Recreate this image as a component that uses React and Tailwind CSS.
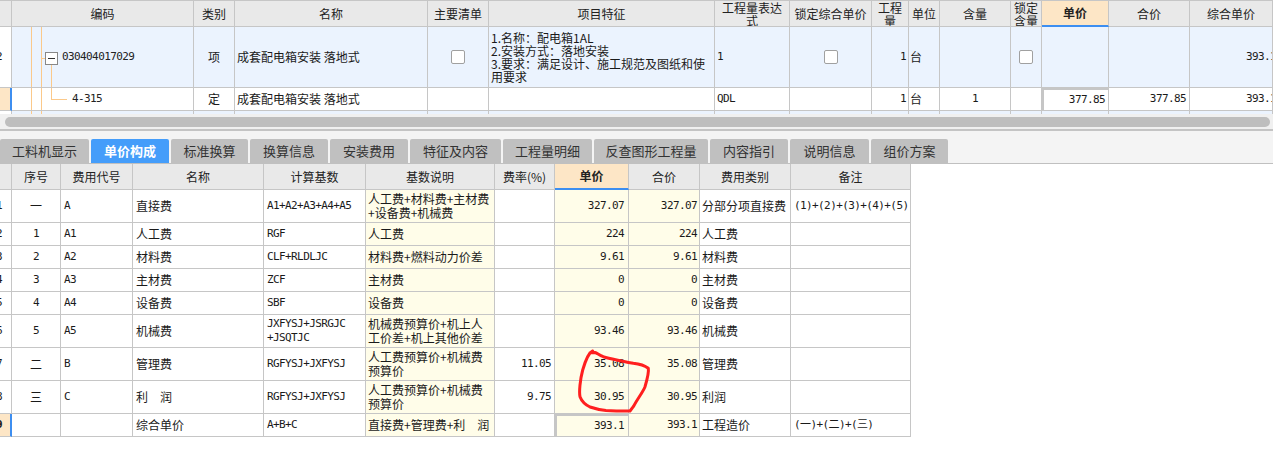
import React from 'react';

const CN = "font-['Noto_Sans_CJK_SC','Microsoft_YaHei',sans-serif]";
const MONO = "font-['DejaVu_Sans_Mono','Liberation_Mono','Noto_Sans_CJK_SC',monospace] text-[11px] tracking-[-0.6px]";
const LINE = 'border-r border-b border-[#c6c6c6]';

const Cell = ({ className = '', children }) => (
  <div className={`${LINE} relative flex items-center overflow-hidden ${className}`}>{children}</div>
);

const Check = () => <div className="w-[14px] h-[14px] bg-white border border-[#a0a0a0] rounded-[2px]" />;

const Lines = () => (
  <>
    <div className="absolute left-[19px] top-0 bottom-0 w-px bg-[#fbc98a]" />
    <div className="absolute left-[29px] top-0 bottom-0 w-px bg-[#fbc98a]" />
  </>
);

const TopTable = () => {
  const head = 'bg-[#e9e9e9] justify-center text-center text-[12px] leading-[12px] text-[#222]';
  const head2 = 'bg-[#e9e9e9] justify-center text-center text-[12px] leading-[13px] text-[#222]';
  const blue = 'bg-[#ebf3fe]';
  return (
    <div className="grid grid-cols-[12px_182px_41px_193px_61px_226px_75px_82px_37px_31px_71px_31px_67px_81px_83px] grid-rows-[26px_61px_23px_3px] border-t border-[#c6c6c6]">
      {/* header */}
      <Cell className={head} />
      <Cell className={head}>编码</Cell>
      <Cell className={head}>类别</Cell>
      <Cell className={head}>名称</Cell>
      <Cell className={head}>主要清单</Cell>
      <Cell className={head}>项目特征</Cell>
      <Cell className={head2}><div>工程量表达<br />式</div></Cell>
      <Cell className={`${head} whitespace-nowrap`}>锁定综合单价</Cell>
      <Cell className={head2}><div>工程<br />量</div></Cell>
      <Cell className={head}>单位</Cell>
      <Cell className={head}>含量</Cell>
      <Cell className={head2}><div>锁定<br />含量</div></Cell>
      <Cell className="bg-[#fde6c6] justify-center text-[12px] font-bold text-[#222] border-b-2 border-b-[#3d8ef0]">单价</Cell>
      <Cell className={head}>合价</Cell>
      <Cell className={head}>综合单价</Cell>

      {/* row 1 */}
      <Cell className="bg-white"><span className={`${MONO} -ml-[4px]`}>2</span></Cell>
      <Cell className={blue}>
        <Lines />
        <div className="absolute left-[29px] top-[31px] w-[4px] h-px bg-[#fbc98a]" />
        <div className="absolute left-[39px] top-[37px] bottom-0 w-px bg-[#fbc98a]" />
        <div className="absolute left-[33px] top-[25px] w-[13px] h-[13px] bg-white border border-[#888] flex items-center justify-center">
          <div className="w-[7px] h-px bg-[#333]" />
        </div>
        <span className={`${MONO} ml-[50px] text-[#222]`}>030404017029</span>
      </Cell>
      <Cell className={`${blue} justify-center text-[12px]`}>项</Cell>
      <Cell className={`${blue} pl-[2px] text-[12px]`}>成套配电箱安装 落地式</Cell>
      <Cell className={`${blue} justify-center`}><Check /></Cell>
      <Cell className={`${blue} pl-[2px] text-[12px] leading-[13px]`}>
        <div>1.名称：配电箱1AL<br />2.安装方式：落地安装<br />3.要求：满足设计、施工规范及图纸和使用要求</div>
      </Cell>
      <Cell className={`${blue} pl-[2px]`}><span className={MONO}>1</span></Cell>
      <Cell className={`${blue} justify-center`}><Check /></Cell>
      <Cell className={`${blue} justify-end pr-[2px]`}><span className={MONO}>1</span></Cell>
      <Cell className={`${blue} pl-px text-[12px]`}>台</Cell>
      <Cell className={blue} />
      <Cell className={`${blue} justify-center`}><Check /></Cell>
      <Cell className={blue} />
      <Cell className={blue} />
      <Cell className={`${blue} justify-end`}><span className={`${MONO} -mr-[4px]`}>393.1</span></Cell>

      {/* row 2 */}
      <Cell className="bg-[#fde6c6] border-r-2 border-r-[#3d8ef0]" />
      <Cell className="bg-white">
        <Lines />
        <div className="absolute left-[39px] top-0 h-[11px] w-px bg-[#fbc98a]" />
        <div className="absolute left-[39px] top-[11px] w-[16px] h-px bg-[#fbc98a]" />
        <span className={`${MONO} ml-[60px] text-[#222]`}>4-315</span>
      </Cell>
      <Cell className="justify-center text-[12px]">定</Cell>
      <Cell className="pl-[2px] text-[12px]">成套配电箱安装 落地式</Cell>
      <Cell />
      <Cell />
      <Cell className="pl-[2px]"><span className={MONO}>QDL</span></Cell>
      <Cell />
      <Cell className="justify-end pr-[2px]"><span className={MONO}>1</span></Cell>
      <Cell className="pl-px text-[12px]">台</Cell>
      <Cell className="justify-center"><span className={MONO}>1</span></Cell>
      <Cell />
      <Cell className="justify-end pr-[3px] border-2 border-[#7f7f7f]"><span className={MONO}>377.85</span></Cell>
      <Cell className="justify-end pr-[3px]"><span className={MONO}>377.85</span></Cell>
      <Cell className="justify-end"><span className={`${MONO} -mr-[4px]`}>393.1</span></Cell>

      {/* partial row */}
      {Array.from({ length: 15 }).map((_, i) => (
        <div key={i} className={`relative border-r border-[#c6c6c6] ${i === 0 ? 'bg-white' : 'bg-[#ebf3fe]'}`}>
          {i === 1 && <Lines />}
        </div>
      ))}
    </div>
  );
};

const tabs = [
  ['工料机显示', 'w-[89px]'],
  ['单价构成', 'w-[78px]'],
  ['标准换算', 'w-[77px]'],
  ['换算信息', 'w-[78px]'],
  ['安装费用', 'w-[78px]'],
  ['特征及内容', 'w-[91px]'],
  ['工程量明细', 'w-[89px]'],
  ['反查图形工程量', 'w-[114px]'],
  ['内容指引', 'w-[78px]'],
  ['说明信息', 'w-[79px]'],
  ['组价方案', 'w-[77px]'],
];

const rows = [
  ['1', '一', 'A', '直接费', 'A1+A2+A3+A4+A5', '人工费+材料费+主材费\n+设备费+机械费', '', '327.07', '327.07', '分部分项直接费', '(1)+(2)+(3)+(4)+(5)'],
  ['2', '1', 'A1', '人工费', 'RGF', '人工费', '', '224', '224', '人工费', ''],
  ['3', '2', 'A2', '材料费', 'CLF+RLDLJC', '材料费+燃料动力价差', '', '9.61', '9.61', '材料费', ''],
  ['4', '3', 'A3', '主材费', 'ZCF', '主材费', '', '0', '0', '主材费', ''],
  ['5', '4', 'A4', '设备费', 'SBF', '设备费', '', '0', '0', '设备费', ''],
  ['6', '5', 'A5', '机械费', 'JXFYSJ+JSRGJC\n+JSQTJC', '机械费预算价+机上人\n工价差+机上其他价差', '', '93.46', '93.46', '机械费', ''],
  ['7', '二', 'B', '管理费', 'RGFYSJ+JXFYSJ', '人工费预算价+机械费\n预算价', '11.05', '35.08', '35.08', '管理费', ''],
  ['8', '三', 'C', '利　润', 'RGFYSJ+JXFYSJ', '人工费预算价+机械费\n预算价', '9.75', '30.95', '30.95', '利润', ''],
  ['9', '', '', '综合单价', 'A+B+C', '直接费+管理费+利　润', '', '393.1', '393.1', '工程造价', '(一)+(二)+(三)'],
];

const Multi = ({ text }) => (
  <div>
    {text.split('\n').map((t, i) => (
      <div key={i}>{t}</div>
    ))}
  </div>
);

const BottomTable = () => {
  const head = 'bg-[#e9e9e9] justify-center text-[12px] text-[#222]';
  const cream = 'bg-[#fffde9]';
  return (
    <div className="grid w-[911px] grid-cols-[12px_49px_72px_131px_102px_129px_60px_74px_71px_91px_120px] grid-rows-[26px_33px_23px_23px_23px_23px_33px_33px_33px_23px]">
      <Cell className={head} />
      <Cell className={head}>序号</Cell>
      <Cell className={head}>费用代号</Cell>
      <Cell className={head}>名称</Cell>
      <Cell className={head}>计算基数</Cell>
      <Cell className={head}>基数说明</Cell>
      <Cell className={head}>费率(%)</Cell>
      <Cell className="bg-[#fde6c6] justify-center text-[12px] font-bold text-[#222] border-b-2 border-b-[#3d8ef0]">单价</Cell>
      <Cell className={head}>合价</Cell>
      <Cell className={head}>费用类别</Cell>
      <Cell className={head}>备注</Cell>
      {rows.map((r, i) => {
        const last = i === rows.length - 1;
        return (
          <React.Fragment key={i}>
            <Cell className={last ? 'bg-[#fde6c6] border-r-2 border-r-[#3d8ef0]' : 'bg-white'}>
              <span className={`${MONO} -ml-[4px] ${last ? 'font-bold' : ''}`}>{r[0]}</span>
            </Cell>
            <Cell className="justify-center text-[12px]">
              {/^[0-9]$/.test(r[1]) ? <span className={MONO}>{r[1]}</span> : r[1]}
            </Cell>
            <Cell className="pl-[3px]"><span className={MONO}>{r[2]}</span></Cell>
            <Cell className="pl-[3px] text-[12px]">{r[3]}</Cell>
            <Cell className={`pl-[3px] ${MONO} leading-[14px]`}><Multi text={r[4]} /></Cell>
            <Cell className={`${cream} pl-[2px] text-[12px] leading-[14px] whitespace-nowrap`}><Multi text={r[5]} /></Cell>
            <Cell className="justify-end pr-[3px]"><span className={MONO}>{r[6]}</span></Cell>
            <Cell className={`${cream} justify-end pr-[4px] ${last ? 'border-2 border-[#7f7f7f]' : ''}`}>
              <span className={MONO}>{r[7]}</span>
            </Cell>
            <Cell className={`${cream} justify-end pr-[2px]`}><span className={MONO}>{r[8]}</span></Cell>
            <Cell className="pl-[2px] text-[12px]">{r[9]}</Cell>
            <Cell className="pl-[3px]"><span className={`${MONO} whitespace-nowrap`}>{r[10]}</span></Cell>
          </React.Fragment>
        );
      })}
    </div>
  );
};

export default function App() {
  return (
    <div className={`relative w-[1273px] h-[452px] overflow-hidden bg-white text-[#1a1a1a] ${CN}`}>
      <TopTable />

      {/* horizontal scrollbar */}
      <div className="h-[15px] bg-[#f0f0f0] pt-[3px] pl-[5px] pr-[3px]">
        <div className="h-[10px] rounded-full bg-[#bebebe]" />
      </div>
      <div className="h-[2px] bg-[#c4c4c4]" />

      {/* tabs */}
      <div className="flex items-end gap-[2px] h-[33px] bg-[#f4f4f4] border-b border-[#c0c0c0]">
        {tabs.map(([t, w], i) => (
          <div
            key={t}
            className={`${w} h-[24px] rounded-t-[2px] flex items-center justify-center text-[13px] ${
              i === 1 ? 'bg-[#449dfa] text-white font-bold' : 'bg-[#c0c0c0] text-[#333]'
            }`}
          >
            {t}
          </div>
        ))}
      </div>

      <BottomTable />

      {/* red hand-drawn annotation */}
      <svg className="absolute inset-0 pointer-events-none" width="1273" height="452" viewBox="0 0 1273 452">
        <path
          d="M592.7 351 C588 353 585 362 582.7 370 C580 380 579 392 580 396.7 C582 402 586 405 590 407 C596 409 600 410 606 410.5 C615 411 624 411 630 411 L633.3 406.7 C638 398 643 392 645 386.7 C647 380 649 372 648.3 368.3 C644 365 640 364 633.3 363.3 C626 362 621 361 616.7 360 C610 358.5 606 357.5 603.3 356.7 C599 355 597 353 595 352.5 L590 352.7"
          fill="none"
          stroke="#ff1f1f"
          strokeWidth="3"
          strokeLinecap="round"
          strokeLinejoin="round"
        />
      </svg>
    </div>
  );
}
